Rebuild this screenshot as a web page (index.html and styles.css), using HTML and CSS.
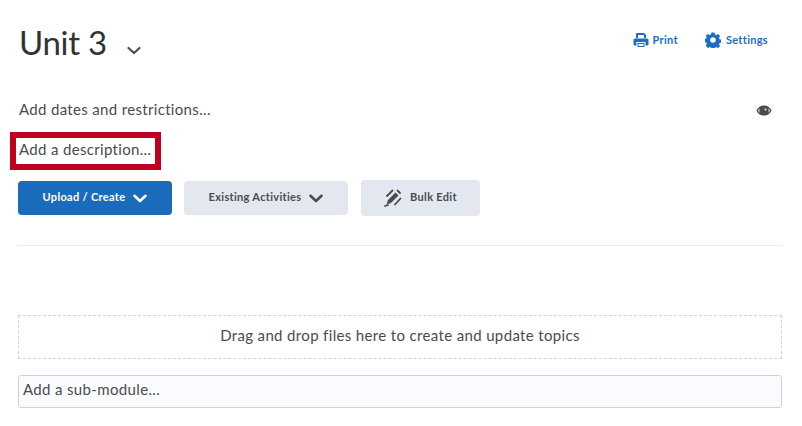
FILE: index.html
```html
<!DOCTYPE html>
<html lang="en">
<head>
<meta charset="utf-8">
<title>Unit 3</title>
<link rel="stylesheet" href="styles.css">
</head>
<body>
<main class="page">
  <header class="head">
    <div class="title-wrap">
      <h1 class="title">Unit 3</h1>
      <svg class="title-chev" viewBox="0 0 14 9" width="14" height="9"><path d="M1.500 2 L7 7 L12.500 2" fill="none" stroke="#494c4e" stroke-width="2.200" stroke-linecap="round" stroke-linejoin="round"/></svg>
    </div>
    <nav class="tools">
      <a class="tool tool-print">
        <svg viewBox="0 0 16 16" width="16" height="16"><path fill="#1b6ec2" d="M4 1h7l2 2v3H11V3H5v3H3V2a1 1 0 0 1 1-1z"/><path fill="#1b6ec2" d="M2 6.500h12a1.500 1.500 0 0 1 1.500 1.500v4a1.500 1.500 0 0 1-1.500 1.500h-1.500V10h-9v3.500H2A1.500 1.500 0 0 1 .5 12V8A1.500 1.500 0 0 1 2 6.500z"/><path fill="#1b6ec2" d="M4.500 11h7v4h-7z"/><path fill="#fff" d="M5.500 12h5v2h-5z"/></svg>
        <span>Print</span>
      </a>
      <a class="tool">
        <svg viewBox="0 0 16 16" width="16" height="16"><path fill="#1b6ec2" fill-rule="evenodd" d="M6.500.5h3l.4 2 1.300.6 1.800-1.100 2.100 2.100-1.100 1.800.6 1.300 2 .4v3l-2 .4-.6 1.300 1.100 1.800-2.100 2.100-1.800-1.100-1.300.6-.4 1.800h-3l-.4-1.800-1.300-.6-1.800 1.100L.7 13.500l1.100-1.800-.6-1.300-1.800-.4v-3l1.800-.4.6-1.300L.7 4.100 2.800 2l1.800 1.100 1.300-.6zM8 5.200a2.800 2.800 0 1 0 0 5.600 2.800 2.800 0 0 0 0-5.600z"/></svg>
        <span>Settings</span>
      </a>
    </nav>
  </header>

  <div class="dates">
    <span class="line-text">Add dates and restrictions...</span>
    <svg class="eye" viewBox="0 0 16 11" width="16" height="11"><path fill="#494c4e" fill-rule="evenodd" d="M8 .5c3.500 0 6.500 2 7.500 5-1 3-4 5-7.500 5s-6.500-2-7.500-5c1-3 4-5 7.500-5zM3.600 3.300C2.800 4 2.300 4.700 2.200 5.500c.1.800.6 1.500 1.400 2.200-.4-1.400-.4-3 0-4.400zm8.800 0c.4 1.400.4 3 0 4.400.8-.7 1.300-1.400 1.400-2.200-.1-.8-.6-1.500-1.400-2.200zM9.500 3.500a1 1 0 1 0 0 2 1 1 0 0 0 0-2z"/></svg>
  </div>

  <div class="desc-box"><span class="line-text">Add a description...</span></div>

  <div class="actions">
    <button class="btn btn-primary"><span class="btn-label">Upload / Create</span>
      <svg viewBox="0 0 14 9" width="14" height="9"><path d="M1.500 1.800 L7 7 L12.500 1.800" fill="none" stroke="#fff" stroke-width="2.600" stroke-linecap="round" stroke-linejoin="round"/></svg>
    </button>
    <button class="btn btn-existing"><span class="btn-label">Existing Activities</span>
      <svg viewBox="0 0 14 9" width="14" height="9"><path d="M1.500 1.800 L7 7 L12.500 1.800" fill="none" stroke="#494c4e" stroke-width="2.600" stroke-linecap="round" stroke-linejoin="round"/></svg>
    </button>
    <button class="btn btn-bulk">
      <svg viewBox="0 0 18 18" width="18" height="18"><path fill="#494c4e" d="M11.500 3.500l3 3-7.500 7.500-4.500 1.500 1.500-4.500z"/><path d="M8.500 1.500 L3 7M16.500 9.500 L11 15.500M13.500 1.500 L16 4" fill="none" stroke="#494c4e" stroke-width="1.800" stroke-linecap="round"/><path d="M1 17 L4 16" stroke="#494c4e" stroke-width="1.800" stroke-linecap="round"/></svg>
      <span class="bulk-label">Bulk Edit</span>
    </button>
  </div>

  <hr class="rule">

  <div class="drop">Drag and drop files here to create and update topics</div>
  <div class="sub">Add a sub-module...</div>
</main>
</body>
</html>
```

FILE: styles.css
```css
* { box-sizing: border-box; }
html, body { margin: 0; padding: 0; background: #fff; }
body { font-family: Lato, "Liberation Sans", sans-serif; color: #494c4e; }
.page { width: 802px; height: 426px; padding: 0 20px 0 18px; overflow: hidden; }

.head { display: flex; justify-content: space-between; align-items: flex-start; height: 100px; padding-top: 21px; }
.title-wrap { display: flex; align-items: flex-start; padding-left: 1px; }
.title { margin: 0; font-size: 33px; line-height: 42px; font-weight: 400; letter-spacing: -.3px; color: #303234; }
.title-chev { margin: 25px 0 0 20px; }
.tools { display: flex; gap: 28px; padding: 11px 14px 0 0; }
.tool { display: flex; align-items: center; gap: 5px; height: 16px; color: #1b6ec2; font-size: 11px; font-weight: 700; letter-spacing: .3px; }
.tool-print { gap: 4px; margin-right: -1px; }
.tool span { position: relative; top: -1px; }

.dates { display: flex; justify-content: space-between; align-items: center; height: 20px; padding: 0 10px 0 1px; }
.line-text { font-size: 15px; letter-spacing: .33px; line-height: 20px; }
.dates .line-text { position: relative; top: -1px; }
.eye { display: block; }

.desc-box { width: 151px; height: 38px; margin: 12px 0 0 -8px; border: 6px solid #c00020; padding: 1px 0 0 3px; white-space: nowrap; }

.actions { display: flex; align-items: center; margin-top: 10px; }
.btn { display: flex; align-items: center; justify-content: center; gap: 8px; border: 0; border-radius: 4px; font-family: inherit; font-size: 11px; font-weight: 700; letter-spacing: .32px; padding: 0; }
.btn-label { position: relative; top: -2px; }
.btn-primary { width: 154px; height: 34px; background: #1a6bbc; color: #fff; }
.btn-existing { width: 164px; height: 34px; margin-left: 12px; background: #e3e8f0; color: #494c4e; }
.btn-bulk { width: 119px; height: 36px; margin-left: 13px; background: #e3e8f0; color: #494c4e; }
.bulk-label { position: relative; top: -2px; }

.rule { height: 1px; margin: 29px 0 0; border: 0; background: #e6eaf0; }

.drop { height: 44px; margin-top: 69px; padding-bottom: 5px; border: 1px dashed #cdd5dc; display: flex; align-items: center; justify-content: center; font-size: 15px; letter-spacing: .35px; }
.sub { height: 33px; margin-top: 16px; border: 1px solid #c9d3da; border-radius: 3px; background: #f9fbff; padding-left: 4px; font-size: 15px; letter-spacing: .35px; line-height: 27px; }
```
